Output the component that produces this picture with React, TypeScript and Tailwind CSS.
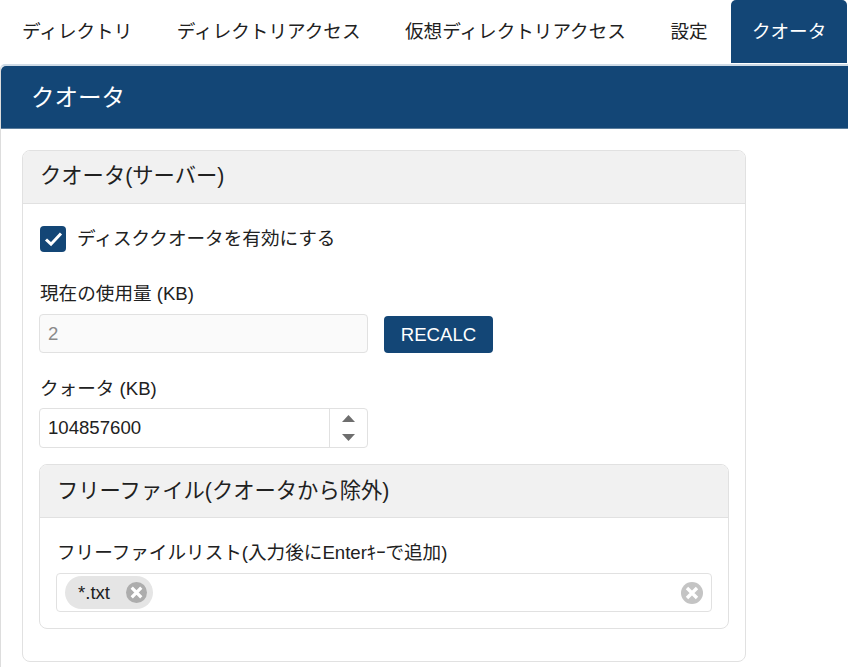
import React from "react";

const font = { fontFamily: '"Liberation Sans", "Noto Sans CJK JP", sans-serif' };

function ClearIcon({ className }: { className: string }) {
  return (
    <svg viewBox="0 0 22 22" className={className}>
      <circle cx="11" cy="11" r="11" fill="currentColor" />
      <path d="M6 6 L16 16 M16 6 L6 16" stroke="#fff" strokeWidth="3.4" />
    </svg>
  );
}

const tabs = ["ディレクトリ", "ディレクトリアクセス", "仮想ディレクトリアクセス", "設定"];

export default function App() {
  return (
    <div style={font} className="w-[848px] h-[667px] overflow-hidden bg-white text-[#212121]">
      <div className="flex h-[63px] pl-px">
        {tabs.map((t) => (
          <div key={t} className="px-[21px] mr-[2.5px] flex items-center text-[18.6px]">{t}</div>
        ))}
        <div className="w-[116px] flex items-center justify-center text-[18.6px] bg-[#134676] text-white rounded-t-[5px]">クオータ</div>
      </div>
      <div className="mt-px border-t-2 border-[#cfdbe6] rounded-tl-[5px] h-[604px] border-l border-l-[#dddddd]">
        <div className="h-[63px] bg-[#134676] text-white text-[23.5px] flex items-center pl-[30px] pt-[4px] border-b border-[#5b7d9c] rounded-tl-[5px]">クオータ</div>
        <div className="ml-[21px] mt-[21px] w-[724px] h-[512px] border border-[#e1e1e1] rounded-[8px] overflow-hidden">
          <div className="h-[53px] bg-[#f1f1f1] border-b border-[#e1e1e1] flex items-center pl-[17px] text-[21.3px]">クオータ(サーバー)</div>
          <div className="pl-[16px]">
            <div className="flex items-center mt-[22px] h-[26px] ml-px">
              <div className="w-[26px] h-[26px] rounded-[4px] bg-[#134676]">
                <svg viewBox="0 0 26 26" className="w-[26px] h-[26px]" fill="none" stroke="#fff" strokeWidth="3"><path d="M6 13.5 L11 18.2 L21 7.5" /></svg>
              </div>
              <span className="ml-[11px] text-[18.6px]">ディスククオータを有効にする</span>
            </div>
            <div className="mt-[29px] text-[18.6px] h-[26px] leading-[26px] pl-[1px]">現在の使用量 (KB)</div>
            <div className="mt-[7px] flex items-center">
              <div className="w-[329px] h-[39px] rounded-[4px] border border-[#e1e1e1] bg-[#fafafa] text-[#8a8a8a] text-[18.6px] flex items-center pl-[8px]">2</div>
              <div className="ml-[16px] w-[109px] h-[37px] mt-[2px] rounded-[4px] bg-[#134676] text-white text-[18.6px] flex items-center justify-center">RECALC</div>
            </div>
            <div className="mt-[23px] text-[18.6px] h-[26px] leading-[26px] pl-[1px]">クォータ (KB)</div>
            <div className="mt-[6px] w-[329px] h-[40px] rounded-[4px] border border-[#e1e1e1] flex text-[18.6px]">
              <div className="flex-1 flex items-center pl-[8px]">104857600</div>
              <div className="w-[38px] border-l border-[#e1e1e1] flex flex-col items-center justify-center gap-[12px]">
                <svg viewBox="0 0 13 7" className="w-[13px] h-[7px]"><path d="M6.5 0 L13 7 L0 7 Z" fill="#6e6e6e" /></svg>
                <svg viewBox="0 0 13 7" className="w-[13px] h-[7px]"><path d="M0 0 L13 0 L6.5 7 Z" fill="#6e6e6e" /></svg>
              </div>
            </div>
            <div className="mt-[16px] w-[690px] h-[165px] border border-[#e1e1e1] rounded-[8px] overflow-hidden">
              <div className="h-[53px] bg-[#f1f1f1] border-b border-[#e1e1e1] flex items-center pl-[17px] pt-[2px] text-[21.3px]">フリーファイル(クオータから除外)</div>
              <div className="pl-[16px] pr-[16px]">
                <div className="mt-[22px] text-[18.6px] h-[26px] leading-[26px] pl-[1px]">フリーファイルリスト(入力後にEnterｷｰで追加)</div>
                <div className="mt-[7px] h-[39px] rounded-[4px] border border-[#e1e1e1] flex items-center justify-between pl-[8px] pr-[8px]">
                  <div className="h-[33px] w-[88px] rounded-full bg-[#e5e5e5] flex items-center pl-[13px] text-[18.6px]">
                    <span>*.txt</span>
                    <ClearIcon className="w-[21px] h-[21px] ml-auto mr-[6px] text-[#adadad]" />
                  </div>
                  <ClearIcon className="w-[22px] h-[22px] text-[#c4c4c4]" />
                </div>
              </div>
            </div>
          </div>
        </div>
      </div>
    </div>
  );
}
